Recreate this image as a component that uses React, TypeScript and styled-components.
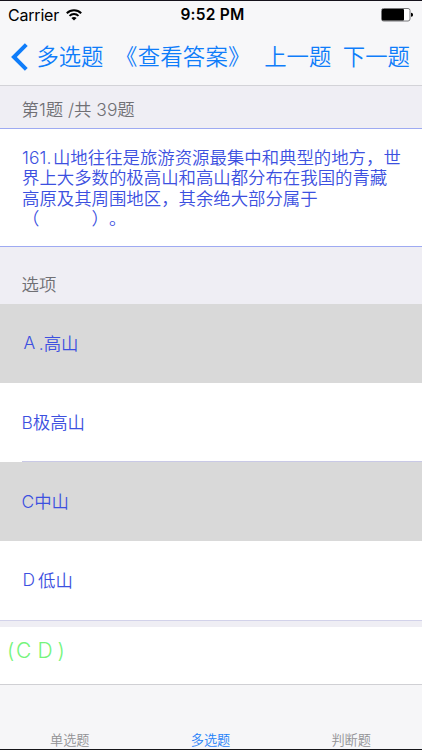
import React from "react";
import styled, { createGlobalStyle } from "styled-components";

const GlobalStyle = createGlobalStyle`
  * { box-sizing: border-box; }
  body { margin: 0; background: #fff; }
`;

const Screen = styled.div`
  width: 422px;
  height: 750px;
  display: flex;
  flex-direction: column;
  overflow: hidden;
  background: #efeef4;
  border-top: 1px solid #15121c;
  border-bottom: 1px solid #15151a;
  font-family: Inter, "Noto Sans CJK SC", sans-serif;
  font-weight: 350;
  white-space: nowrap;
  text-spacing-trim: space-all;
`;

const TopBar = styled.header`
  flex: none;
  height: 85px;
  background: #f7f7f9;
  border-bottom: 1px solid #d3d3d8;
`;

const StatusBar = styled.div`
  height: 27px;
  display: grid;
  grid-template-columns: 1fr auto 1fr;
  align-items: center;
  padding: 0 9px 0 8px;
  color: #000;
`;

const Carrier = styled.div`
  display: flex;
  align-items: center;
  gap: 7px;
  font-size: 16px;
  font-weight: 380;
  letter-spacing: -0.2px;
`;

const Clock = styled.div`
  padding-left: 4px;
  font-size: 15.5px;
  font-weight: 600;
  letter-spacing: 0.25px;
`;

const BatterySlot = styled.div`
  display: flex;
  justify-content: flex-end;
`;

const NavBar = styled.nav`
  height: 57px;
  display: flex;
  align-items: center;
  padding: 0 0 0 11px;
`;

const NavButton = styled.button<{ $gap: number; $pitch?: number }>`
  border: 0;
  padding: 0;
  background: none;
  margin-left: ${(p) => p.$gap}px;
  color: #0f7dfa;
  font: inherit;
  font-size: 22.4px;
  letter-spacing: ${(p) => p.$pitch ?? 0}px;
  line-height: 30px;
`;

const SectionHeader = styled.h2<{ $height: number; $top: number }>`
  flex: none;
  height: ${(p) => p.$height}px;
  margin: 0;
  padding: ${(p) => p.$top}px 0 0 21.5px;
  font-size: 17.4px;
  font-weight: inherit;
  line-height: 22px;
  color: #707074;
`;

const Question = styled.section`
  flex: none;
  height: 119px;
  padding: 19px 0 0 22px;
  background: #fff;
  border-top: 1px solid #9eaaf2;
  border-bottom: 1px solid #9eaaf2;
  color: #3c50e0;
  font-size: 17.4px;
  line-height: 20.4px;
`;

const QuestionLine = styled.div`
  height: 20.4px;
  white-space: pre;
`;

const QuestionNumber = styled.span`
  margin-right: 1.5px;
  letter-spacing: 0.1px;
`;

const Options = styled.ul`
  flex: none;
  margin: 0;
  padding: 0;
  list-style: none;
  border-bottom: 1px solid #d2d2ea;
`;

const Option = styled.li<{ $selected: boolean; $inset?: number; $rule?: boolean }>`
  height: 79px;
  display: flex;
  align-items: center;
  padding: 0 0 2px ${(p) => 21.5 + (p.$inset ?? 0)}px;
  color: #3c50e0;
  background: ${(p) =>
    p.$selected
      ? "#d9d9d9"
      : p.$rule
        ? "linear-gradient(#c9c9e6, #c9c9e6) 22px 100% / 100% 1px no-repeat #fff"
        : "#fff"};
  font-size: 17.4px;
`;

const Letter = styled.span<{ $space: number }>`
  margin-right: ${(p) => p.$space}px;
`;

const Answer = styled.div`
  flex: none;
  height: 58px;
  margin-top: 6px;
  padding: 10px 0 0 7px;
  background: #fff;
  border-bottom: 1px solid #d0d0d4;
  color: #75f47b;
  font-size: 21px;
  line-height: 28px;
`;

const AnswerGlyph = styled.span<{ $width: number }>`
  display: inline-block;
  width: ${(p) => p.$width}px;
`;

const TabBar = styled.footer`
  flex: 1;
  display: flex;
  align-items: flex-end;
  justify-content: space-between;
  padding: 0 51px 0 50px;
  background: #f6f6f8;
`;

const Tab = styled.button<{ $active?: boolean }>`
  border: 0;
  padding: 0;
  background: none;
  font: inherit;
  font-size: 13.2px;
  line-height: 17px;
  color: ${(p) => (p.$active ? "#1f82f8" : "#929295")};
`;

const WifiIcon = () => (
  <svg width="16" height="12" viewBox="0 0 16 12" fill="none" stroke="#000">
    <path d="M.8 4.2C4.8.2 11.2.2 15.2 4.2" strokeWidth="2" />
    <path d="M3.5 6.9C6 4.4 10 4.4 12.5 6.9" strokeWidth="1.9" />
    <path d="M8 11.6 5.4 9C6.8 7.6 9.2 7.6 10.6 9Z" fill="#000" stroke="none" />
  </svg>
);

const BatteryIcon = () => (
  <svg width="32" height="14" viewBox="0 0 32 14">
    <rect x=".5" y=".5" width="28.5" height="12.5" rx="2" fill="#fff" stroke="#77777a" />
    <rect x="1" y="1" width="22" height="11.5" rx="1" fill="#000" />
    <path d="M30 4.8c1.6 0 2 1 2 2s-.4 2-2 2Z" fill="#000" />
  </svg>
);

const BackIcon = () => (
  <svg width="18" height="28" viewBox="0 0 18 28" fill="none">
    <path d="M15.3 1.6 2.9 14 15.3 26.4" stroke="#0f7dfa" strokeWidth="4" />
  </svg>
);

export default function App() {
  return (
    <Screen>
      <GlobalStyle />
      <TopBar>
        <StatusBar>
          <Carrier>
            Carrier
            <WifiIcon />
          </Carrier>
          <Clock>9:52 PM</Clock>
          <BatterySlot>
            <BatteryIcon />
          </BatterySlot>
        </StatusBar>
        <NavBar>
          <BackIcon />
          <NavButton $gap={7.5} $pitch={-0.2}>多选题</NavButton>
          <NavButton $gap={12} $pitch={0.2}>《查看答案》</NavButton>
          <NavButton $gap={13.5}>上一题</NavButton>
          <NavButton $gap={11.5}>下一题</NavButton>
        </NavBar>
      </TopBar>
      <SectionHeader $height={42} $top={13}>第1题 /共 39题</SectionHeader>
      <Question>
        <QuestionLine>
          <QuestionNumber>161.</QuestionNumber>山地往往是旅游资源最集中和典型的地方，世
        </QuestionLine>
        <QuestionLine>界上大多数的极高山和高山都分布在我国的青藏</QuestionLine>
        <QuestionLine>高原及其周围地区，其余绝大部分属于</QuestionLine>
        <QuestionLine>（　　　）。</QuestionLine>
      </Question>
      <SectionHeader $height={57} $top={27}>选项</SectionHeader>
      <Options>
        <Option $selected $inset={2}>
          <Letter $space={3.5}>A</Letter>.高山
        </Option>
        <Option $selected={false} $rule>B极高山</Option>
        <Option $selected>C中山</Option>
        <Option $selected={false} $inset={1}>
          <Letter $space={3}>D</Letter>低山
        </Option>
      </Options>
      <Answer>
        <AnswerGlyph $width={9}>(</AnswerGlyph>
        <AnswerGlyph $width={21.5}>C</AnswerGlyph>
        <AnswerGlyph $width={20}>D</AnswerGlyph>
        <AnswerGlyph $width={8}>)</AnswerGlyph>
      </Answer>
      <TabBar>
        <Tab>单选题</Tab>
        <Tab $active>多选题</Tab>
        <Tab>判断题</Tab>
      </TabBar>
    </Screen>
  );
}
